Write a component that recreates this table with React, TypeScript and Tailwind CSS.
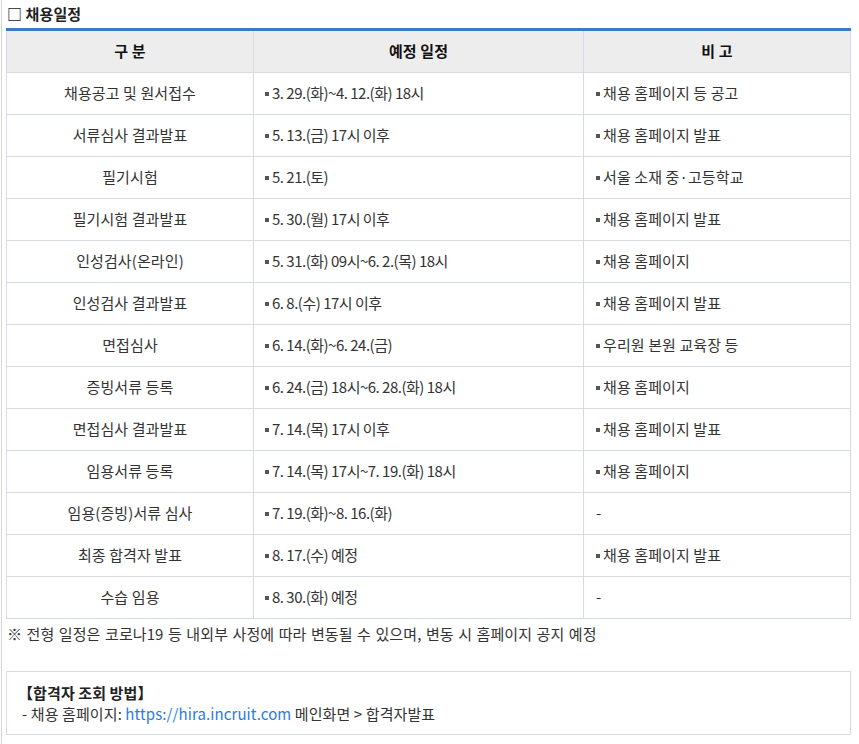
import React from "react";

type Row = { name: string; date: string; note: string | null };

const rows: Row[] = [
  { name: "채용공고 및 원서접수", date: "3. 29.(화)~4. 12.(화) 18시", note: "채용 홈페이지 등 공고" },
  { name: "서류심사 결과발표", date: "5. 13.(금) 17시 이후", note: "채용 홈페이지 발표" },
  { name: "필기시험", date: "5. 21.(토)", note: "서울 소재 중·고등학교" },
  { name: "필기시험 결과발표", date: "5. 30.(월) 17시 이후", note: "채용 홈페이지 발표" },
  { name: "인성검사(온라인)", date: "5. 31.(화) 09시~6. 2.(목) 18시", note: "채용 홈페이지" },
  { name: "인성검사 결과발표", date: "6. 8.(수) 17시 이후", note: "채용 홈페이지 발표" },
  { name: "면접심사", date: "6. 14.(화)~6. 24.(금)", note: "우리원 본원 교육장 등" },
  { name: "증빙서류 등록", date: "6. 24.(금) 18시~6. 28.(화) 18시", note: "채용 홈페이지" },
  { name: "면접심사 결과발표", date: "7. 14.(목) 17시 이후", note: "채용 홈페이지 발표" },
  { name: "임용서류 등록", date: "7. 14.(목) 17시~7. 19.(화) 18시", note: "채용 홈페이지" },
  { name: "임용(증빙)서류 심사", date: "7. 19.(화)~8. 16.(화)", note: null },
  { name: "최종 합격자 발표", date: "8. 17.(수) 예정", note: "채용 홈페이지 발표" },
  { name: "수습 임용", date: "8. 30.(화) 예정", note: null },
];

function Bullet({ text, tight }: { text: string; tight?: boolean }) {
  return (
    <div className="flex items-center">
      <span className="inline-block w-[4px] h-[4px] bg-[#555] mr-[3px] mt-[1px]" />
      <span className={tight ? "tracking-[-0.5px]" : ""}>{text}</span>
    </div>
  );
}

export default function App() {
  return (
    <div
      className="min-h-[744px] bg-white text-[#333] text-[15px] tracking-[0.1px]"
      style={{ fontFamily: '"Noto Sans CJK KR", "Noto Sans", sans-serif' }}
    >
      <div className="ml-[1px] min-h-[744px] border-l border-[#d4d4d4] pl-[4px]">
        <div className="h-[28px] flex items-center pl-[1px] font-bold text-[15px] text-[#222]">
          □ 채용일정
        </div>
        <div className="w-[845px] border-t-[3px] border-[#3d7bc9]">
          <div className="border-x border-[#d6dae3]">
            <div className="grid grid-cols-[247px_330px_266px] h-[42px] bg-[#ededed] border-b border-[#d6dae3] font-bold text-[#111]">
              <div className="flex items-center justify-center border-r border-[#d6dae3]">구 분</div>
              <div className="flex items-center justify-center border-r border-[#d6dae3]">예정 일정</div>
              <div className="flex items-center justify-center">비 고</div>
            </div>
            {rows.map((r, i) => (
              <div
                key={i}
                className="grid grid-cols-[247px_330px_266px] h-[42px] border-b border-[#d6dae3]"
              >
                <div className="flex items-center justify-center border-r border-[#d6dae3]">{r.name}</div>
                <div className="flex items-center pl-[11px] border-r border-[#d6dae3]">
                  <Bullet text={r.date} tight />
                </div>
                <div className="flex items-center pl-[12px]">
                  {r.note ? <Bullet text={r.note} /> : <span>-</span>}
                </div>
              </div>
            ))}
          </div>
        </div>
        <div className="mt-[5px] leading-[20px] pl-[1px] [word-spacing:1px]">
          ※ 전형 일정은 코로나19 등 내외부 사정에 따라 변동될 수 있으며, 변동 시 홈페이지 공지 예정
        </div>
        <div className="mt-[27px] w-[845px] h-[64px] border border-[#d6dae3] px-[11px] pt-[10px] leading-[21px]">
          <div className="font-bold text-[#222]">【합격자 조회 방법】</div>
          <div className="pl-[4px]">
            - 채용 홈페이지: <span className="text-[#2a7be4]">https://hira.incruit.com</span> 메인화면 &gt; 합격자발표
          </div>
        </div>
      </div>
    </div>
  );
}
